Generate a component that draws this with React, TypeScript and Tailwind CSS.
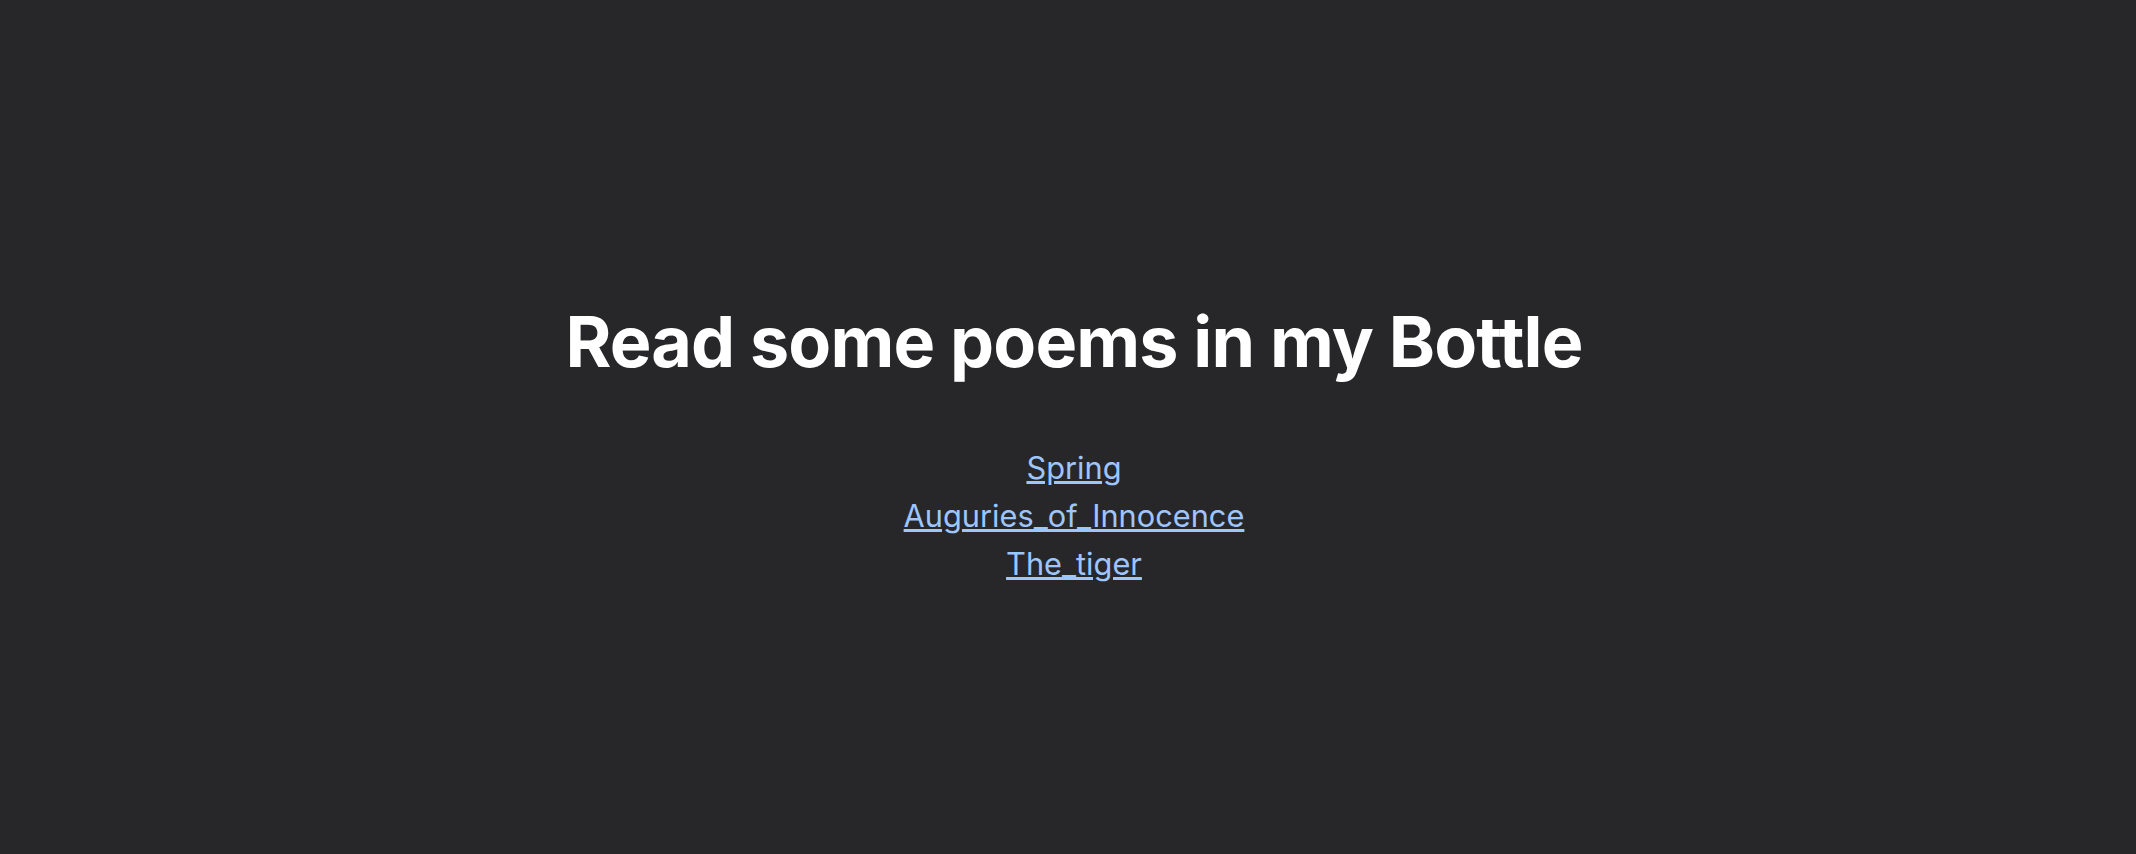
export default function App() {
    return (
        <div className="min-h-screen w-full bg-[#27272a] flex flex-col items-center justify-center font-['Inter',sans-serif] pt-[34px] pl-[12px]">
            <h1 className="text-[70px] font-bold text-white leading-[1.2] tracking-[-0.85px]">
                Read some poems in my Bottle
            </h1>
            <ul className="mt-[60px] flex flex-col items-center text-[30.75px] leading-[48px]">
                <li><a href="#" className="text-[#9ec5fe] underline">Spring</a></li>
                <li><a href="#" className="text-[#9ec5fe] underline">Auguries_of_Innocence</a></li>
                <li><a href="#" className="text-[#9ec5fe] underline">The_tiger</a></li>
            </ul>
        </div>
    )
}
